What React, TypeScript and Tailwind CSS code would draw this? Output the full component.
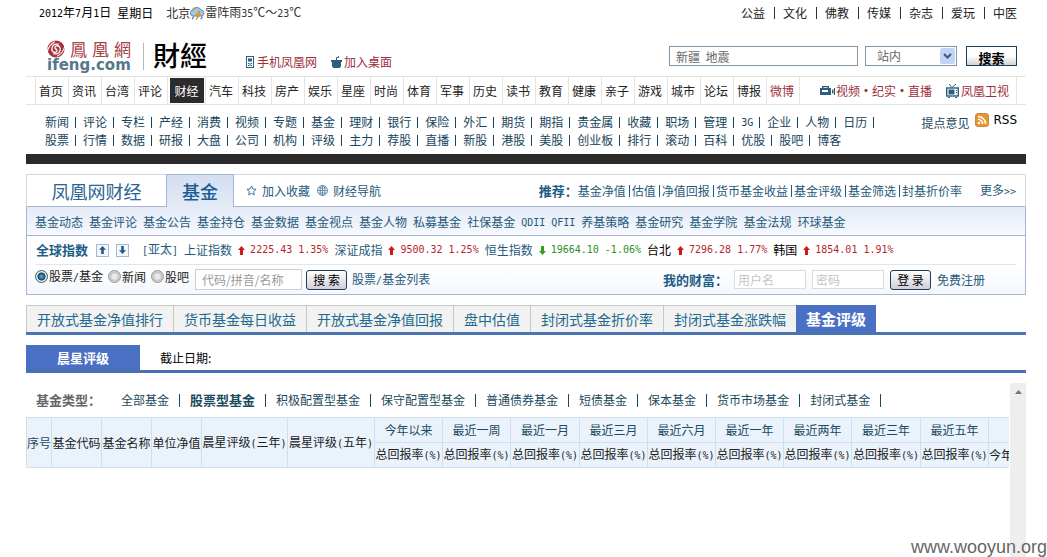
import type { ReactNode } from "react";
import clsx from "clsx";

const topLinks = ["公益", "文化", "佛教", "传媒", "杂志", "爱玩", "中医"];

const channels = [
  "首页", "资讯", "台湾", "评论", "财经", "汽车", "科技", "房产", "娱乐", "星座", "时尚", "体育",
  "军事", "历史", "读书", "教育", "健康", "亲子", "游戏", "城市", "论坛", "博报", "微博",
];

const subRows = [
  ["新闻", "评论", "专栏", "产经", "消费", "视频", "专题", "基金", "理财", "银行", "保险", "外汇", "期货", "期指", "贵金属", "收藏", "职场", "管理", "3G", "企业", "人物", "日历"],
  ["股票", "行情", "数据", "研报", "大盘", "公司", "机构", "评级", "主力", "荐股", "直播", "新股", "港股", "美股", "创业板", "排行", "滚动", "百科", "优股", "股吧", "博客"],
];

const recommended = ["基金净值", "估值", "净值回报", "货币基金收益", "基金评级", "基金筛选", "封基折价率"];

const fundLinks = [
  "基金动态", "基金评论", "基金公告", "基金持仓", "基金数据", "基金视点", "基金人物", "私募基金",
  "社保基金", "QDII", "QFII", "养基策略", "基金研究", "基金学院", "基金法规", "环球基金",
];

const quotes = [
  { name: "上证指数", value: "2225.43", change: "1.35%", up: true, link: true },
  { name: "深证成指", value: "9500.32", change: "1.25%", up: true, link: true },
  { name: "恒生指数", value: "19664.10", change: "-1.06%", up: false, link: true },
  { name: "台北", value: "7296.28", change: "1.77%", up: true, link: false },
  { name: "韩国", value: "1854.01", change: "1.91%", up: true, link: false },
];

const tabs = ["开放式基金净值排行", "货币基金每日收益", "开放式基金净值回报", "盘中估值", "封闭式基金折价率", "封闭式基金涨跌幅", "基金评级"];

const fundTypes = ["全部基金", "股票型基金", "积极配置型基金", "保守配置型基金", "普通债券基金", "短债基金", "保本基金", "货币市场基金", "封闭式基金"];

const periods = ["今年以来", "最近一周", "最近一月", "最近三月", "最近六月", "最近一年", "最近两年", "最近三年", "最近五年"];

function Mono({ children }: { children: ReactNode }) {
  return <span className="font-['DejaVu_Sans_Mono',monospace] text-[10px]">{children}</span>;
}

function Label({ text }: { text: string }) {
  return /^[A-Z0-9]+$/.test(text) ? <Mono>{text}</Mono> : <>{text}</>;
}

function Swirl() {
  return (
    <svg width="18" height="18" viewBox="0 0 18 18" aria-hidden="true">
      <circle cx="9" cy="9" r="8.6" fill="#a8323c" />
      <g fill="none" stroke="#fff" strokeLinecap="round">
        <path d="M9 9.200c-1.600-.8-1.400-3 .5-3.400 2.600-.5 4.400 2 3.600 4.600-.8 2.600-3.600 4-6.400 3.400" strokeWidth="1.300" />
        <path d="M9 9c1.500.9 1.200 3-.6 3.300C5.800 12.600 4.200 10.200 5 7.700 5.800 5 8.400 3.700 11.200 4.200" strokeWidth="1.300" />
        <path d="M0 12.500C.8 9 3 4.400 7.500 2" strokeWidth="1.100" />
        <path d="M18 5.500C17.200 9 15 13.600 10.500 16" strokeWidth="1.100" />
      </g>
    </svg>
  );
}

function Weather() {
  return (
    <svg width="15" height="15" viewBox="0 0 15 15" aria-hidden="true">
      <circle cx="5.500" cy="5" r="4" fill="#efc04a" />
      <path d="M3 10a3 3 0 0 1 .6-6A3.800 3.800 0 0 1 10.800 4 3.100 3.100 0 0 1 12 10Z" fill="#a9c5dd" stroke="#5f84a3" strokeWidth=".9" />
      <path d="M8.500 5.500 5.600 10h2L6 14 10.600 8.600H8.400L10 5.500Z" fill="#f2a818" stroke="#94691a" strokeWidth=".4" />
      <path d="M3.500 10.500 2.300 13.300M12.200 10.500 11 13.300" stroke="#3d88c2" strokeWidth="1.400" />
    </svg>
  );
}

function Arrow({ up }: { up: boolean }) {
  return (
    <svg width="7" height="9" viewBox="0 0 7 9" className={clsx("shrink-0", !up && "rotate-180")} aria-hidden="true">
      <path d="M3.500 0 7 4H5V9H2V4H0Z" fill={up ? "#d01818" : "#3a9a1e"} />
    </svg>
  );
}

function MoveButton({ up }: { up: boolean }) {
  return (
    <button type="button" aria-label={up ? "上移" : "下移"} className="flex size-[13px] shrink-0 items-center justify-center border border-[#a9b8d0] bg-[#f3f7fc]">
      <svg width="7" height="8" viewBox="0 0 7 8" className={up ? "" : "rotate-180"} aria-hidden="true">
        <path d="M3.500 0 7 3.700H4.800V8H2.200V3.700H0Z" fill="#1c5a94" />
      </svg>
    </button>
  );
}

function Radio({ children, checked }: { children: ReactNode; checked?: boolean }) {
  return (
    <label className="flex items-center gap-px whitespace-nowrap">
      <input
        type="radio"
        name="scope"
        defaultChecked={checked}
        className="size-[13px] appearance-none rounded-full border border-[#8e9499] bg-[radial-gradient(circle,#e8e8e8_30%,#bdbdbd_60%,#f4f4f4_75%)] checked:border-[#3d5a70] checked:bg-[radial-gradient(circle,#4f9ccb_12%,#17435f_45%,#e4ebf0_58%)]"
      />
      <span>{children}</span>
    </label>
  );
}

function Header() {
  return (
    <header>
      <div className="flex h-[26px] items-center justify-between pr-[9px] pl-[13px] text-black">
        <div className="flex items-center whitespace-nowrap">
          <span>
            <Mono>2012</Mono>年<Mono>7</Mono>月<Mono>1</Mono>日
          </span>
          <span className="ml-[6px]">星期日</span>
          <span className="ml-[13px] text-[#333]">北京</span>
          <Weather />
          <span className="text-[#333]">
            雷阵雨<Mono>35</Mono>℃～<Mono>23</Mono>℃
          </span>
        </div>
        <nav className="flex items-center whitespace-nowrap text-[#222]">
          {topLinks.map((t, i) => (
            <span key={t} className="flex items-center">
              {i > 0 && <i className="mr-[8px] ml-[9px] h-[12px] w-px bg-[#333]" />}
              <a href="#">{t}</a>
            </span>
          ))}
        </nav>
      </div>

      <div className="flex h-[50px] items-start pt-[14px] pr-[9px] pl-[21px]">
        <a href="#" className="flex flex-col" aria-label="ifeng.com">
          <span className="flex h-[18px] items-center gap-[5px] font-['Noto_Sans_CJK_TC',sans-serif] text-[17px] leading-[18px] text-[#a8434a]">
            <Swirl />
            <span>鳳</span>
            <span>凰</span>
            <span>網</span>
          </span>
          <span className="font-['DejaVu_Sans',sans-serif] text-[15px] leading-[15px] font-bold text-[#55788a]">ifeng.com</span>
        </a>
        <i className="mt-[3px] ml-[12px] h-[27px] w-px bg-[#a9bcc4]" />
        <a href="#" className="ml-[9px] font-['Noto_Sans_CJK_TC',sans-serif] text-[27px] leading-[30px] font-medium text-black">財經</a>
        <div className="mt-[14px] ml-[39px] flex items-center whitespace-nowrap text-[#9c2f3c]">
          <svg width="8" height="12" viewBox="0 0 8 12" aria-hidden="true">
            <rect x=".5" y=".5" width="7" height="11" fill="#fff" stroke="#2c5f7c" />
            <path d="M2 2.500h4v3H2ZM2 7h1v1H2ZM5 7h1v1H5ZM2 9h1v1H2ZM5 9h1v1H5ZM3.500 7h1v3h-1Z" fill="#2c5f7c" />
          </svg>
          <a href="#" className="ml-[3px]">手机凤凰网</a>
          <svg width="11" height="12" viewBox="0 0 11 12" className="ml-[14px]" aria-hidden="true">
            <path d="M0 4h11v2h-1v4.500L8.500 12h-6L1 10.500V6H0Z" fill="#2c5f7c" />
            <path d="M5.500 4.500V1.500h2V0" stroke="#2c5f7c" fill="none" />
          </svg>
          <a href="#" className="ml-[2px]">加入桌面</a>
        </div>
        <form className="mt-[6px] ml-auto flex h-[20px]" onSubmit={(e) => e.preventDefault()}>
          <input aria-label="搜索内容" defaultValue="新疆  地震" className="h-[20px] w-[189px] border border-[#8097ab] bg-white px-[6px] text-[#666] outline-none" />
          <span className="relative ml-[7px] flex">
            <select aria-label="搜索范围" className="h-[20px] w-[92px] appearance-none border border-[#8097ab] bg-white pl-[11px] text-[#666] outline-none">
              <option>站内</option>
            </select>
            <span className="pointer-events-none absolute top-[2px] right-[2px] flex h-[16px] w-[15px] items-center justify-center rounded-xs bg-[#c3d3f5]">
              <svg width="9" height="6" viewBox="0 0 9 6" aria-hidden="true">
                <path d="m1 1 3.500 3.500L8 1" fill="none" stroke="#3c5788" strokeWidth="2" />
              </svg>
            </span>
          </span>
          <button type="submit" className="ml-[9px] h-[20px] w-[51px] overflow-hidden border border-[#173f5c] bg-linear-to-b from-white from-50% to-[#d6d3ce] pt-[3px] text-[13px] leading-[16px] font-bold text-black">
            搜索
          </button>
        </form>
      </div>

      <nav className="flex h-[29px] items-stretch border-y border-[#dfe3e1] pl-[9px] whitespace-nowrap text-[#222]">
        {channels.map((c) => (
          <a
            key={c}
            href="#"
            className={clsx(
              "flex items-center border-l border-[#e2e5e3]",
              c === "财经" ? "w-[38px] justify-center py-px" : "w-[33px] pl-[3px]",
              c === "微博" && "text-[#9c2f3c]",
            )}
          >
            {c === "财经" ? <span className="flex h-full w-[34px] items-center justify-center bg-[#2b2b2b] text-white">{c}</span> : c}
          </a>
        ))}
        <div className="mr-[9px] flex grow items-center justify-end border-x border-[#e2e5e3] pr-[7px] text-[#9c2f3c]">
          <svg width="15" height="10" viewBox="0 0 15 10" className="mr-px" aria-hidden="true">
            <path d="M2 2V0h7v2h2v7H0V2ZM3.500 1.200V2h4v-.8ZM2 4v2h6V4ZM12 4l1.500-1v5L12 7ZM14 2h1v7h-1Z" fill="#2c5f7c" fillRule="evenodd" />
          </svg>
          <a href="#">视频</a>
          <b className="w-[12px] text-center">·</b>
          <a href="#">纪实</a>
          <b className="w-[12px] text-center">·</b>
          <a href="#">直播</a>
          <svg width="13" height="14" viewBox="0 0 13 14" className="mr-[2px] ml-[14px]" aria-hidden="true">
            <path d="M3 0l3 3.500L10 0" stroke="#2c5f7c" fill="none" />
            <rect x=".7" y="4" width="11.600" height="8" fill="#fff" stroke="#2c5f7c" strokeWidth="1.400" />
            <path d="M2.500 5.500h6v5h-6ZM10 6h1v1h-1ZM10 8h1v1h-1ZM2 13h2v1H2ZM9 13h2v1H9Z" fill="#2c5f7c" />
          </svg>
          <a href="#">凤凰卫视</a>
        </div>
      </nav>

      <div className="flex items-start justify-between pt-[8px] pr-[9px] pb-[5px] pl-[19px] leading-[18px] whitespace-nowrap text-[#17455c]">
        <div>
          {subRows.map((row, r) => (
            <div key={r} className="flex h-[18px]">
              {row.map((t, i) => (
                <span key={t} className="mr-[7px] flex items-center gap-[6px]">
                  <a href="#">
                    <Label text={t} />
                  </a>
                  {(r === 0 || i < row.length - 1) && <i className="h-[11px] w-px bg-[#17455c]" />}
                </span>
              ))}
            </div>
          ))}
        </div>
        <div className="flex items-start">
          <a href="#" className="mt-px mr-[6px]">提点意见</a>
          <svg width="14" height="14" viewBox="0 0 14 14" className="mr-[4px]" aria-hidden="true">
            <rect x=".5" y=".5" width="13" height="13" rx="2.500" fill="#e8962f" stroke="#c98a3a" />
            <circle cx="4" cy="10" r="1.300" fill="#fff" />
            <path d="M3 6.300A4.700 4.700 0 0 1 7.700 11M3 3.400A7.600 7.600 0 0 1 10.600 11" fill="none" stroke="#fff" strokeWidth="1.500" />
          </svg>
          <a href="#" className="font-['DejaVu_Sans',sans-serif] text-[12px] leading-[14px] text-black">RSS</a>
        </div>
      </div>
      <div className="h-[10px] bg-[#2b2b2b]" />
    </header>
  );
}

function FundPanel() {
  const pill = "h-[20px] w-[41px] rounded-[3px] border border-[#1d3c58] bg-linear-to-b from-white to-[#cfcfdc] text-black";
  return (
    <section className="mt-[10px] whitespace-nowrap text-[#1f5a7a]">
      <div className="flex h-[33px]">
        <a href="#" className="flex w-[140px] items-center justify-center border-t border-b border-l border-t-[#d6d8de] border-b-[#a6b6d4] border-l-[#d6d8de] text-[18px] text-[#2a6494]">
          凤凰网财经
        </a>
        <a href="#" className="flex w-[68px] items-center justify-center border-x border-t border-[#a6b6d4] bg-linear-to-b from-[#d3def0] to-[#e4ebf7] text-[18px] font-medium text-[#1d5d96]">
          基金
        </a>
        <div className="flex grow items-center border-t border-r border-b border-t-[#d6d8de] border-r-[#d6d8de] border-b-[#a6b6d4] pr-[9px] pl-[12px]">
          <svg width="11" height="11" viewBox="0 0 12 12" className="mr-[5px]" aria-hidden="true">
            <path d="m6 1 1.500 3.300 3.500.4-2.600 2.400.7 3.600L6 9l-3.100 1.700.7-3.600L1 4.700l3.500-.4Z" fill="#fff" stroke="#2f6a92" />
          </svg>
          <a href="#">加入收藏</a>
          <svg width="11" height="11" viewBox="0 0 11 11" className="mr-[5px] ml-[7px]" aria-hidden="true">
            <g fill="none" stroke="#5f87a5" strokeWidth=".9">
              <circle cx="5.500" cy="5.500" r="5" />
              <ellipse cx="5.500" cy="5.500" rx="2.300" ry="5" />
              <path d="M5.500.5v10M.5 5.500h10M1.300 3h8.400M1.300 8h8.400" />
            </g>
          </svg>
          <a href="#">财经导航</a>
          <div className="ml-auto flex items-center">
            <b className="text-[13px] text-[#1d5d86]">推荐：</b>
            {recommended.map((t, i) => (
              <span key={t} className="flex items-center">
                {i > 0 && <i className="mr-[2px] ml-[3px] h-[12px] w-px bg-[#1f5a7a]" />}
                <a href="#">{t}</a>
              </span>
            ))}
            <a href="#" className="ml-[18px]">
              更多<Mono>&gt;&gt;</Mono>
            </a>
          </div>
        </div>
      </div>

      <div className="border-x border-b border-[#a6b6d4]">
        <nav className="flex h-[29px] items-center gap-[6px] border-b border-[#a6b6d4] bg-linear-to-b from-[#e4ebf7] to-[#f6f9fd] px-[8px] pt-[2px]">
          {fundLinks.map((t) => (
            <a key={t} href="#">
              <Label text={t} />
            </a>
          ))}
        </nav>

        <div className="mx-[9px] flex h-[29px] items-center border-b border-[#dde6ee]">
          <b className="mr-[8px] text-[13px] text-[#1d5d86]">全球指数</b>
          <MoveButton up />
          <span className="w-[7px]" />
          <MoveButton up={false} />
          <span className="mr-[6px] ml-[13px]">
            <Mono>[</Mono>亚太<Mono>]</Mono>
          </span>
          {quotes.map((q) => (
            <span key={q.name} className="mr-[6px] flex items-center">
              <a href="#" className={q.link ? "" : "text-black"}>{q.name}</a>
              <span className="mr-[5px] ml-[6px] flex">
                <Arrow up={q.up} />
              </span>
              <span className={clsx("flex gap-[6px]", q.up ? "text-[#b8242b]" : "text-[#2f8f1f]")}>
                <Mono>{q.value}</Mono>
                <Mono>{q.change}</Mono>
              </span>
            </span>
          ))}
        </div>

        <form className="flex h-[29px] items-center bg-linear-to-b from-white to-[#f4f7fc] pl-[8px]" onSubmit={(e) => e.preventDefault()}>
          <div className="mb-[6px] flex gap-[5px] text-[#222]">
            <Radio checked>
              股票<Mono>/</Mono>基金
            </Radio>
            <Radio>新闻</Radio>
            <Radio>股吧</Radio>
          </div>
          <input aria-label="代码/拼音/名称" placeholder="代码/拼音/名称" className="ml-[6px] h-[21px] w-[107px] border border-[#c9ced4] bg-white px-[6px] outline-none placeholder:text-[#999]" />
          <button type="submit" className={clsx(pill, "ml-[4px]")}>搜 索</button>
          <a href="#" className="ml-[5px]">
            股票<Mono>/</Mono>基金列表
          </a>
          <div className="mr-[40px] ml-auto flex items-center">
            <b className="text-[13px] text-[#1d5d86]">我的财富：</b>
            <input aria-label="用户名" placeholder="用户名" className="ml-[6px] h-[19px] w-[72px] border border-[#dcdcdc] bg-white px-[3px] outline-none placeholder:text-[#c4c4c4]" />
            <input aria-label="密码" placeholder="密码" className="ml-[6px] h-[19px] w-[72px] border border-[#dcdcdc] bg-white px-[3px] outline-none placeholder:text-[#c4c4c4]" />
            <button type="button" className={clsx(pill, "ml-[6px]")}>登 录</button>
            <a href="#" className="ml-[6px]">免费注册</a>
          </div>
        </form>
      </div>
    </section>
  );
}

function Ratings() {
  const cell = "border-r border-b border-[#cfe0ec] p-0";
  return (
    <div className="mt-[10px] flex min-h-[174px] grow">
      <div className="w-0 grow overflow-hidden">
        <div className="flex h-[34px] items-center pl-[10px] whitespace-nowrap text-[#1c4a60]">
          <b className="mr-[20px] w-[65px] text-[13px] text-[#666]">基金类型：</b>
          {fundTypes.map((t) => (
            <span key={t} className="flex items-center">
              <a href="#" className={t === "股票型基金" ? "text-[13px] font-bold" : ""}>{t}</a>
              <i className="mx-[10px] h-[13px] w-px bg-[#1c4a60]" />
            </span>
          ))}
        </div>
        <table className="w-[1056px] table-fixed border-separate border-spacing-0 border-t border-l border-[#cfe0ec] bg-[#eaf3fb] whitespace-nowrap text-[#222]">
          <colgroup>
            <col className="w-[25px]" />
            <col className="w-[50px]" />
            <col className="w-[50px]" />
            <col className="w-[50px]" />
            <col className="w-[86px]" />
            <col className="w-[87px]" />
            {periods.map((p, i) => (
              <col key={p} className={i % 5 === 2 ? "w-[69px]" : "w-[68px]"} />
            ))}
            <col />
          </colgroup>
          <thead>
            <tr className="h-[25px]">
              <th rowSpan={2} className={clsx(cell, "font-normal text-[#1c4a60]")}>序号</th>
              {["基金代码", "基金名称", "单位净值"].map((t) => (
                <th key={t} rowSpan={2} className={clsx(cell, "font-normal")}>{t}</th>
              ))}
              {["三年", "五年"].map((t) => (
                <th key={t} rowSpan={2} className={clsx(cell, "font-normal")}>
                  晨星评级<Mono>(</Mono>{t}<Mono>)</Mono>
                </th>
              ))}
              {periods.map((p) => (
                <th key={p} className={clsx(cell, "font-normal text-[#1c4a60]")}>{p}</th>
              ))}
              <th className={cell} />
            </tr>
            <tr className="h-[25px]">
              {periods.map((p) => (
                <th key={p} className={clsx(cell, "font-normal")}>
                  总回报率<Mono>(%)</Mono>
                </th>
              ))}
              <th className={clsx(cell, "text-left font-normal")}>今年</th>
            </tr>
          </thead>
        </table>
      </div>
      <div className="flex w-[17px] justify-center border-l border-white bg-[#eeeeee] pt-[7px]">
        <svg width="7" height="4" viewBox="0 0 7 4" aria-hidden="true">
          <path d="M3.500 0 7 4H0Z" fill="#777" />
        </svg>
      </div>
    </div>
  );
}

export default function App() {
  return (
    <div
      lang="zh-CN"
      className="relative flex min-h-screen flex-col overflow-hidden bg-white pr-[21px] pl-[26px] font-['Noto_Sans_CJK_SC','Liberation_Sans',sans-serif] text-[12px] leading-[16px]"
    >
      <Header />
      <FundPanel />

      <nav className="mt-[10px] flex h-[30px] border-b-3 border-[#4a74b4] text-[14px] whitespace-nowrap text-[#1f6a8e]">
        {tabs.map((t) => (
          <a
            key={t}
            href="#"
            className={clsx(
              "flex items-center px-[10px]",
              t === "基金评级" ? "bg-[#4a70c4] text-[15px] font-bold text-white" : "border-t border-l border-[#c8c8c8] bg-[#f2f2f2]",
            )}
          >
            {t}
          </a>
        ))}
      </nav>

      <div className="mt-[10px] flex h-[28px] items-stretch border-b-3 border-[#4a70b0] text-black">
        <h2 className="flex w-[114px] items-center justify-center bg-[#4a70c4] text-[13px] font-bold text-white">晨星评级</h2>
        <span className="ml-[20px] flex items-center">截止日期:</span>
      </div>

      <Ratings />

      <div className="pointer-events-none absolute right-0 bottom-0 font-['Liberation_Sans',sans-serif] text-[18px] leading-[20px] text-[#666]">www.wooyun.org</div>
    </div>
  );
}
